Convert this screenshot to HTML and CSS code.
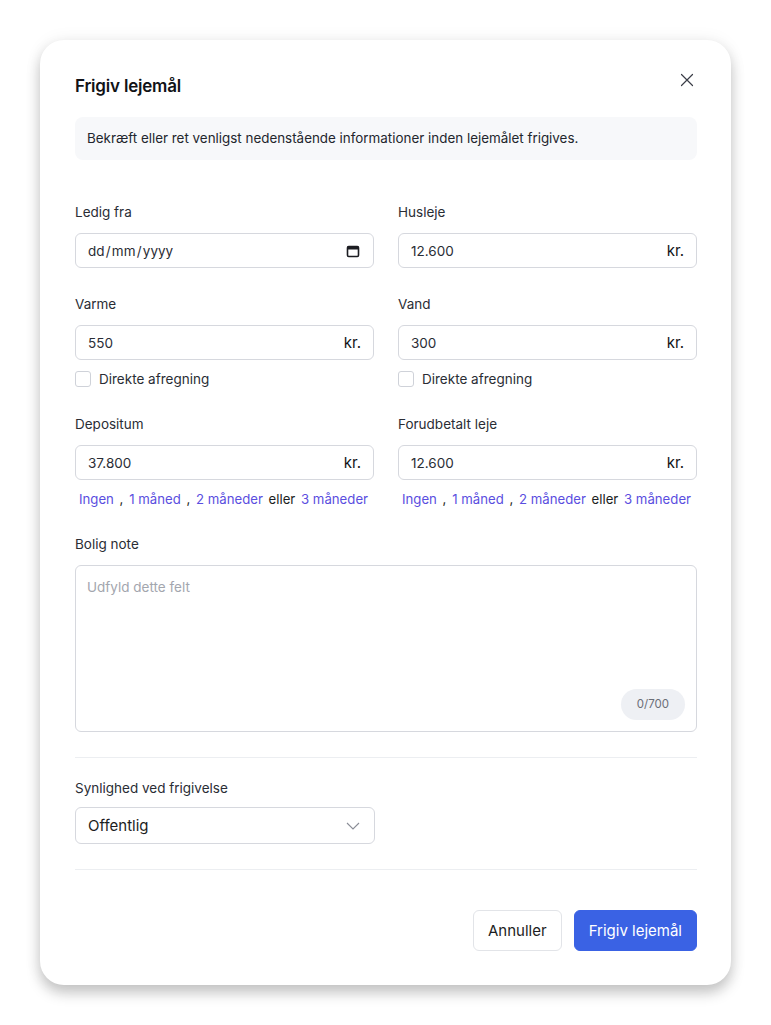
FILE: index.html
```html
<!DOCTYPE html>
<html lang="da">
<head>
    <meta charset="UTF-8">
    <meta name="viewport" content="width=device-width, initial-scale=1.0">
    <title>Frigiv lejemål</title>
    <link rel="stylesheet" href="styles.css">
</head>
<body>
    <div class="modal">
        <div class="modal-header">
            <h2 class="modal-title">Frigiv lejemål</h2>
            <button class="close-btn" aria-label="Luk">
                <svg width="14" height="14" viewBox="0 0 14 14"><path d="M1.5 1.5l11 11M12.5 1.5l-11 11" stroke="#3a3d47" stroke-width="1.2" fill="none" stroke-linecap="round"/></svg>
            </button>
        </div>

        <div class="info-box">
            Bekræft eller ret venligst nedenstående informationer inden lejemålet frigives.
        </div>

        <div class="form-grid">
            <div class="form-group">
                <label>Ledig fra</label>
                <div class="field">
                    <span class="field-value">dd&#8202;/&#8202;mm&#8202;/&#8202;yyyy</span>
                    <svg class="cal-icon" width="14" height="14" viewBox="0 0 14 14"><rect x="1.5" y="2.5" width="11" height="10" rx="1.2" fill="none" stroke="#1c1d22" stroke-width="1.6"/><rect x="1.5" y="2.5" width="11" height="3" fill="#1c1d22"/></svg>
                </div>
            </div>
            <div class="form-group">
                <label>Husleje</label>
                <div class="field">
                    <span class="field-value">12.600</span>
                    <span class="suffix">kr.</span>
                </div>
            </div>

            <div class="form-group">
                <label>Varme</label>
                <div class="field">
                    <span class="field-value">550</span>
                    <span class="suffix">kr.</span>
                </div>
                <label class="check"><span class="box"></span>Direkte afregning</label>
            </div>
            <div class="form-group">
                <label>Vand</label>
                <div class="field">
                    <span class="field-value">300</span>
                    <span class="suffix">kr.</span>
                </div>
                <label class="check"><span class="box"></span>Direkte afregning</label>
            </div>

            <div class="form-group">
                <label>Depositum</label>
                <div class="field">
                    <span class="field-value">37.800</span>
                    <span class="suffix">kr.</span>
                </div>
                <div class="quick-links">
                    <a href="#">Ingen</a> , <a href="#">1 måned</a> , <a href="#">2 måneder</a> eller <a href="#">3 måneder</a>
                </div>
            </div>
            <div class="form-group">
                <label>Forudbetalt leje</label>
                <div class="field">
                    <span class="field-value">12.600</span>
                    <span class="suffix">kr.</span>
                </div>
                <div class="quick-links">
                    <a href="#">Ingen</a> , <a href="#">1 måned</a> , <a href="#">2 måneder</a> eller <a href="#">3 måneder</a>
                </div>
            </div>
        </div>

        <div class="form-group note-group">
            <label>Bolig note</label>
            <div class="textarea">
                <span class="placeholder">Udfyld dette felt</span>
                <span class="counter">0/700</span>
            </div>
        </div>

        <hr class="divider">

        <div class="form-group visibility-group">
            <label class="label-light">Synlighed ved frigivelse</label>
            <div class="select">
                <span>Offentlig</span>
                <svg width="14" height="8" viewBox="0 0 14 8"><path d="M1 1l6 6 6-6" stroke="#8a8d96" stroke-width="1.1" fill="none"/></svg>
            </div>
        </div>

        <hr class="divider">

        <div class="modal-footer">
            <button class="btn btn-secondary">Annuller</button>
            <button class="btn btn-primary">Frigiv lejemål</button>
        </div>
    </div>
</body>
</html>
```

FILE: styles.css
```css
body {
    font-family: 'Inter', 'Liberation Sans', sans-serif;
    margin: 0;
    padding: 40px;
    background-color: #ffffff;
    color: #2a2d35;
}
.modal {
    width: 691px;
    height: 945px;
    box-sizing: border-box;
    background: white;
    border-radius: 24px;
    padding: 34px 34px 35px 35px;
    box-shadow: 0 8px 14px rgba(0,0,0,0.22), 0 0 18px rgba(0,0,0,0.06);
}
.modal-header {
    display: flex;
    justify-content: space-between;
    align-items: flex-start;
    height: 24px;
}
.modal-title {
    font-size: 17px;
    font-weight: 600;
    line-height: 24px;
    margin: 0;
    color: #111216;
    letter-spacing: -0.2px;
}
.close-btn {
    background: none;
    border: none;
    padding: 0;
    margin: -1px 3px 0 0;
    cursor: pointer;
}
.info-box {
    margin-top: 19px;
    background: #f7f8fa;
    border-radius: 8px;
    padding: 12px 12px;
    font-size: 13.4px;
    line-height: 19px;
    color: #23262d;
}
.form-grid {
    margin-top: 42px;
    display: grid;
    grid-template-columns: minmax(0, 1fr) minmax(0, 1fr);
    column-gap: 24px;
    row-gap: 26px;
}
.form-group label {
    display: block;
    font-size: 13.5px;
    line-height: 20px;
    margin-bottom: 11px;
    color: #2a2d35;
}
.field {
    height: 35px;
    box-sizing: border-box;
    border: 1px solid #d6d8de;
    border-radius: 6px;
    display: flex;
    align-items: center;
    justify-content: space-between;
    padding: 0 12px;
    font-size: 13.5px;
}
.field-value {
    color: #2a2d35;
}
.suffix {
    font-size: 15px;
    color: #111216;
}
.cal-icon {
    margin-right: 1px;
}
.form-group label.check {
    display: flex;
    align-items: center;
    gap: 8px;
    margin: 10px 0 0 0;
    line-height: 18px;
    color: #2a2d35;
}
.box {
    width: 14px;
    height: 14px;
    border: 1px solid #cfd2d9;
    border-radius: 3px;
}
.quick-links {
    margin-top: 10px;
    padding-left: 4px;
    font-size: 13.2px;
    line-height: 18px;
    color: #1c1d22;
    white-space: nowrap;
}
.quick-links a {
    color: #5a4ee0;
    text-decoration: none;
    margin: 0 2px;
}
.quick-links a:first-child {
    margin-left: 0;
}
.note-group {
    margin-top: 26px;
}
.textarea {
    height: 167px;
    box-sizing: border-box;
    border: 1px solid #d6d8de;
    border-radius: 6px;
    padding: 13px 11px 11px 11px;
    display: flex;
    flex-direction: column;
    justify-content: space-between;
    align-items: flex-start;
    font-size: 13.5px;
}
.placeholder {
    color: #a3a6ae;
}
.counter {
    align-self: flex-end;
    background: #eef0f4;
    color: #6b6e77;
    font-size: 11.5px;
    line-height: 15px;
    border-radius: 16px;
    padding: 8px 16px;
}
.divider {
    border: none;
    border-top: 1px solid #eceef1;
    margin: 25px 0 0 0;
}
.visibility-group {
    margin-top: 20px;
}
.label-light {
    color: #3a3d45;
}
.form-group.visibility-group label {
    margin-bottom: 9px;
}
.select {
    width: 300px;
    height: 37px;
    box-sizing: border-box;
    border: 1px solid #d6d8de;
    border-radius: 6px;
    display: flex;
    align-items: center;
    justify-content: space-between;
    padding: 0 14px 0 12px;
    font-size: 15px;
    color: #1c1d22;
}
.modal-footer {
    margin-top: 40px;
    display: flex;
    justify-content: flex-end;
    gap: 12px;
}
.btn {
    height: 41px;
    box-sizing: border-box;
    border-radius: 6px;
    font-family: inherit;
    font-size: 15px;
    padding: 0 14px;
    cursor: pointer;
}
.btn-secondary {
    background: white;
    border: 1px solid #e2e4e8;
    color: #1c1d22;
}
.btn-primary {
    background: #3a62e4;
    border: 1px solid #3a62e4;
    color: white;
}
```
